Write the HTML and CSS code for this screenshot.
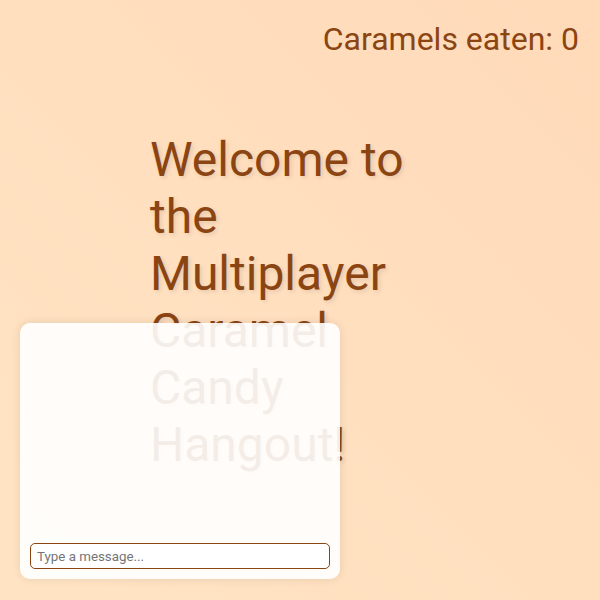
FILE: index.html
```html
<!DOCTYPE html>
<html lang="en">
<head>
<meta charset="utf-8">
<title>Caramel Candy Hangout</title>
<link rel="stylesheet" href="styles.css">
</head>
<body>
  <header class="topbar">
    <div class="counter">Caramels eaten: <span>0</span></div>
  </header>
  <main class="stage">
    <h1 class="welcome">Welcome to the Multiplayer Caramel Candy Hangout!</h1>
  </main>
  <aside class="chat">
    <div class="messages"></div>
    <input class="chat-input" type="text" placeholder="Type a message...">
  </aside>
</body>
</html>
```

FILE: styles.css
```css
html, body {
  margin: 0;
  padding: 0;
  height: 100%;
}

body {
  font-family: Roboto, "Liberation Sans", sans-serif;
  color: #8b4513;
  background: linear-gradient(45deg, #ffe4c4, #ffdab9);
  overflow: hidden;
}

.topbar {
  display: flex;
  justify-content: flex-end;
  padding: 20px 21px 0 0;
}

.counter {
  font-size: 32px;
  line-height: normal;
}

.stage {
  display: flex;
  justify-content: center;
  padding-top: 73px;
}

.welcome {
  width: 300px;
  margin: 0;
  font-size: 48px;
  font-weight: 400;
  line-height: normal;
  text-shadow: 2px 2px 4px rgba(0, 0, 0, 0.1);
}

.chat {
  position: fixed;
  left: 20px;
  bottom: 21px;
  width: 300px;
  height: 236px;
  padding: 10px;
  display: flex;
  flex-direction: column;
  background: rgba(255, 255, 255, 0.9);
  border-radius: 10px;
  box-shadow: 0 0 10px rgba(0, 0, 0, 0.1);
}

.messages {
  flex: 1;
}

.chat-input {
  box-sizing: border-box;
  width: 100%;
  height: 26px;
  padding: 4px 6px;
  border: 1px solid #8b4513;
  border-radius: 5px;
  font-family: Roboto, "Liberation Sans", sans-serif;
  font-size: 13.333px;
  color: #333;
  background: #fff;
  outline: none;
}

.chat-input::placeholder {
  color: #757575;
}
```
